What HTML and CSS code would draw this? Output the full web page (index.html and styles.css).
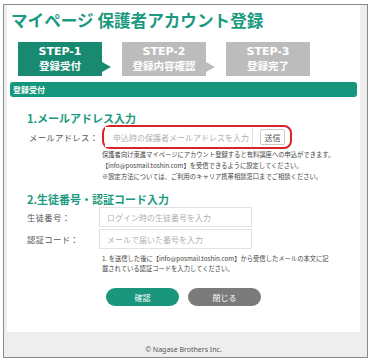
FILE: index.html
```html
<!DOCTYPE html>
<html lang="ja">
<head>
<meta charset="utf-8">
<title>マイページ 保護者アカウント登録</title>
<link rel="stylesheet" href="styles.css">
</head>
<body>
<div class="frame">
  <div class="card">
    <h1 class="title">マイページ 保護者アカウント登録</h1>
    <div class="steps">
      <div class="step step-active step-arrow"><span>STEP-1</span><span>登録受付</span></div>
      <div class="step step-arrow"><span>STEP-2</span><span>登録内容確認</span></div>
      <div class="step"><span>STEP-3</span><span>登録完了</span></div>
    </div>
    <div class="bar">登録受付</div>

    <h2 class="heading">1.メールアドレス入力</h2>
    <div class="row">
      <label class="label">メールアドレス：</label>
      <div class="email-box">
        <input class="input email-input" type="text" placeholder="申込時の保護者メールアドレスを入力">
        <button class="send" type="button">送信</button>
      </div>
    </div>
    <div class="help">
      <p>保護者向け東進マイページにアカウント登録すると有料講座への申込ができます。</p>
      <p>【info@posmail.toshin.com】を受信できるように設定してください。</p>
      <p>※設定方法については、ご利用のキャリア携帯相談窓口までご相談ください。</p>
    </div>

    <h2 class="heading heading-2">2.生徒番号・認証コード入力</h2>
    <div class="row row-plain">
      <label class="label">生徒番号：</label>
      <input class="input field" type="text" placeholder="ログイン時の生徒番号を入力">
    </div>
    <div class="row row-plain row-gap">
      <label class="label">認証コード：</label>
      <input class="input field" type="text" placeholder="メールで届いた番号を入力">
    </div>
    <div class="help note">
      <p>1. を送信した後に【info@posmail.toshin.com】から受信したメールの本文に記</p>
      <p>載されている認証コードを入力してください。</p>
    </div>

    <div class="actions">
      <button class="btn btn-ok" type="button">確認</button>
      <button class="btn btn-close" type="button">閉じる</button>
    </div>
  </div>
  <div class="footer">© Nagase Brothers Inc.</div>
</div>
</body>
</html>
```

FILE: styles.css
```css
* { box-sizing: border-box; }

html, body {
  margin: 0;
  padding: 0;
  background: #ffffff;
}

body {
  font-family: "DejaVu Sans", "Noto Sans CJK JP", sans-serif;
  color: #444;
}

.frame {
  margin: 4px 0 0 3px;
  width: 365px;
  height: 354px;
  border: 1px solid #8a8a8a;
  background: #eeeeee;
  display: flex;
  flex-direction: column;
  padding: 0 7px 0 3px;
}

.card {
  flex: 1;
  background: #ffffff;
  padding: 0 3px;
  display: flex;
  flex-direction: column;
}

.title {
  margin: 0;
  padding: 5px 0 0 1px;
  font-family: "Noto Sans CJK JP", sans-serif;
  font-size: 16.6px;
  line-height: 20px;
  font-weight: 700;
  color: #1b9a80;
  white-space: nowrap;
}

.steps {
  display: flex;
  gap: 20px;
  margin-top: 12px;
  padding-left: 8px;
}

.step {
  position: relative;
  width: 84px;
  height: 34px;
  background: #bcbcbc;
  color: #fff;
  font-weight: 700;
  font-size: 11px;
  display: flex;
  flex-direction: column;
  align-items: center;
  justify-content: center;
  line-height: 14px;
}

.step span:last-child {
  font-family: "Noto Sans CJK JP", sans-serif;
  font-size: 10.5px;
}

.step-active {
  background: #188a71;
}

.step-arrow::after {
  content: "";
  position: absolute;
  right: -9px;
  top: 20px;
  border-left: 9px solid #bcbcbc;
  border-top: 5px solid transparent;
  border-bottom: 5px solid transparent;
}

.step-active.step-arrow::after {
  border-left-color: #188a71;
}

.bar {
  margin-top: 6px;
  height: 15px;
  background: #16967c;
  border-radius: 3px;
  color: #fff;
  font-family: "Noto Sans CJK JP", sans-serif;
  font-weight: 700;
  font-size: 8px;
  line-height: 15px;
  padding-left: 3px;
}

.heading {
  margin: 14px 0 0 17px;
  font-family: "Noto Sans CJK JP", sans-serif;
  font-size: 11px;
  line-height: 14px;
  font-weight: 700;
  color: #1b9a80;
}

.heading-2 {
  margin-top: 10px;
}

.row {
  display: flex;
  align-items: center;
  padding-left: 19px;
}

.row-plain {
  padding-left: 17px;
  margin-top: 1px;
}

.row-gap {
  margin-top: 2px;
}

.label {
  width: 73px;
  flex: none;
  font-family: "Noto Sans CJK JP", sans-serif;
  font-size: 8.4px;
  color: #555;
  letter-spacing: 0.3px;
}

.row-plain .label {
  width: 72px;
}

.email-box {
  width: 190px;
  height: 24px;
  border: 2px solid #d9232a;
  border-radius: 8px;
  display: flex;
  align-items: center;
  padding: 0 5px 0 1px;
}

.input {
  font-family: "Noto Sans CJK JP", sans-serif;
  font-size: 8px;
  color: #444;
  border: 1px solid #e2e2e2;
  background: #fff;
  outline: none;
  padding: 0 0 0 7px;
  margin: 0;
}

.input::placeholder {
  color: #b0b0b0;
}

.email-input {
  width: 149px;
  height: 20px;
  border-left-color: transparent;
  border-top-color: transparent;
  border-bottom-color: transparent;
}

.send {
  margin-left: 7px;
  width: 25px;
  height: 16px;
  padding: 0;
  border: 1px solid #c9c9c9;
  background: #fff;
  border-radius: 2px;
  font-family: "Noto Sans CJK JP", sans-serif;
  font-size: 8px;
  color: #555;
}

.field {
  width: 153px;
  height: 20px;
}

.help {
  margin-left: 92px;
  font-family: "Noto Sans CJK JP", sans-serif;
  font-size: 6.3px;
  line-height: 11px;
  color: #444;
  white-space: nowrap;
}

.help p {
  margin: 0;
}

.note {
  margin-top: 5px;
  line-height: 10px;
}

.actions {
  display: flex;
  justify-content: center;
  gap: 9px;
  margin-top: 14px;
  padding-right: 0;
}

.btn {
  width: 73px;
  height: 18px;
  border: none;
  border-radius: 9px;
  color: #fff;
  font-family: "Noto Sans CJK JP", sans-serif;
  font-size: 8px;
  padding: 0;
}

.btn-ok {
  background: #1a967c;
}

.btn-close {
  background: #7b7b7b;
}

.footer {
  height: 25px;
  flex: none;
  text-align: center;
  font-family: "Noto Sans", sans-serif;
  font-size: 7px;
  line-height: 9px;
  padding-top: 13px;
  color: #555;
}
```
